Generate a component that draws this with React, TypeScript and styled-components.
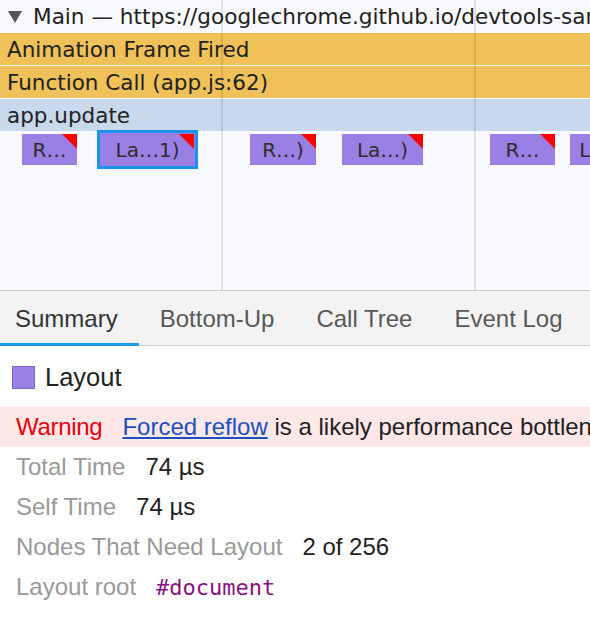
import React from "react";
import styled, { createGlobalStyle } from "styled-components";

const Global = createGlobalStyle`
  html, body { margin: 0; padding: 0; background: #ffffff; }
  body { width: 590px; height: 618px; overflow: hidden; }
  * { box-sizing: border-box; }
`;

const Root = styled.div`
  width: 590px;
  height: 618px;
  overflow: hidden;
  display: flex;
  flex-direction: column;
  background: #ffffff;
`;

const FlameChart = styled.div`
  position: relative;
  height: 291px;
  flex: none;
  background: #f7f9fc;
  border-bottom: 1px solid #cdcdcd;
  overflow: hidden;
  display: flex;
  flex-direction: column;
  gap: 1px;
  font-family: "DejaVu Sans", "Noto Sans", sans-serif;
  color: #222;
`;

const GridLine = styled.div<{ $x: number }>`
  position: absolute;
  top: 0;
  bottom: 0;
  left: ${(p) => p.$x}px;
  width: 2px;
  background: rgba(0, 0, 0, 0.09);
  z-index: 2;
  pointer-events: none;
`;

const TrackHeader = styled.div`
  height: 32px;
  flex: none;
  display: flex;
  align-items: center;
  gap: 11px;
  padding-left: 8px;
  font-size: 21.6px;
  white-space: nowrap;
  color: #222;
`;

const Caret = styled.svg`
  flex: none;
  width: 14px;
  height: 12px;
  margin-top: 1px;
`;

const Bar = styled.div<{ $tone: "yellow" | "blue" }>`
  height: 32px;
  flex: none;
  display: flex;
  align-items: center;
  padding-left: 7px;
  font-size: 21.5px;
  white-space: nowrap;
  background: ${(p) => (p.$tone === "yellow" ? "#efc158" : "#c7d9ea")};
  color: #222;
`;

const EventLane = styled.div`
  position: relative;
  flex: 1;
`;

const Event = styled.div<{ $selected?: boolean }>`
  position: absolute;
  top: 2px;
  height: 31px;
  display: flex;
  align-items: center;
  justify-content: center;
  background: #9a7fe4;
  color: #2c2c2c;
  font-size: 20px;
  white-space: nowrap;
  overflow: hidden;
  box-shadow: ${(p) =>
    p.$selected ? "0 0 0 1px #9a7fe4, 0 0 0 4px #1b93ec" : "none"};
  &::after {
    content: "";
    position: absolute;
    top: 0;
    right: 0;
    width: 0;
    height: 0;
    border-top: 15px solid #ff0000;
    border-left: 15px solid transparent;
  }
`;

const TabBar = styled.div`
  height: 55px;
  flex: none;
  display: flex;
  background: #f3f3f3;
  border-bottom: 1px solid #cfcfcf;
  font-family: "Liberation Sans", Arial, sans-serif;
  font-size: 24px;
`;

const Tab = styled.div<{ $active?: boolean }>`
  display: flex;
  align-items: center;
  padding: 0 21px;
  color: ${(p) => (p.$active ? "#333" : "#585858")};
  box-shadow: ${(p) => (p.$active ? "inset 0 -3px 0 #1d9be6" : "none")};
  margin-bottom: -1px;
  &:first-child {
    padding-left: 15px;
  }
`;

const Details = styled.div`
  flex: 1;
  display: flex;
  flex-direction: column;
  padding-top: 11px;
  font-family: "Liberation Sans", Arial, sans-serif;
  font-size: 24px;
`;

const Title = styled.div`
  height: 40px;
  display: flex;
  align-items: center;
  gap: 10px;
  padding-left: 12px;
  margin-bottom: 10px;
  font-size: 25.5px;
  color: #222;
`;

const Swatch = styled.span<{ $color: string }>`
  width: 23px;
  height: 23px;
  flex: none;
  background: ${(p) => p.$color};
  border: 1px solid #7c64c8;
`;

const Row = styled.div<{ $warning?: boolean }>`
  height: 40px;
  display: flex;
  align-items: center;
  gap: 20px;
  padding-left: 16px;
  white-space: nowrap;
  background: ${(p) => (p.$warning ? "#fde7e7" : "transparent")};
`;

const Label = styled.span<{ $warning?: boolean }>`
  color: ${(p) => (p.$warning ? "#e8000c" : "#999999")};
  letter-spacing: ${(p) => (p.$warning ? "-0.3px" : "0")};
`;

const Value = styled.span`
  color: #222;
`;

const WarningText = styled.span`
  color: #222;
`;

const Link = styled.a`
  color: #1a4fc0;
  text-decoration: underline;
  cursor: pointer;
`;

const Code = styled.span`
  font-family: "DejaVu Sans Mono", "Liberation Mono", monospace;
  font-size: 22px;
  color: #881280;
`;

const events = [
  { left: 22, width: 55, label: "R…" },
  { left: 101, width: 93, label: "La…1)", selected: true },
  { left: 250, width: 66, label: "R…)" },
  { left: 342, width: 81, label: "La…)" },
  { left: 490, width: 65, label: "R…" },
  { left: 570, width: 62, label: "La…" },
];

const tabs = ["Summary", "Bottom-Up", "Call Tree", "Event Log"];

export default function App() {
  return (
    <Root>
      <Global />
      <FlameChart>
        <GridLine $x={221} />
        <GridLine $x={474} />
        <TrackHeader>
          <Caret viewBox="0 0 14 12">
            <path d="M0 0 H14 L7 12 Z" fill="#555" />
          </Caret>
          Main — https://googlechrome.github.io/devtools-samples/jank/
        </TrackHeader>
        <Bar $tone="yellow">Animation Frame Fired</Bar>
        <Bar $tone="yellow">Function Call (app.js:62)</Bar>
        <Bar $tone="blue">app.update</Bar>
        <EventLane>
          {events.map((e) => (
            <Event
              key={e.left}
              $selected={e.selected}
              style={{ left: e.left, width: e.width }}
            >
              {e.label}
            </Event>
          ))}
        </EventLane>
      </FlameChart>
      <TabBar>
        {tabs.map((t, i) => (
          <Tab key={t} $active={i === 0}>
            {t}
          </Tab>
        ))}
      </TabBar>
      <Details>
        <Title>
          <Swatch $color="#9a7fe4" />
          Layout
        </Title>
        <Row $warning>
          <Label $warning>Warning</Label>
          <WarningText>
            <Link>Forced reflow</Link> is a likely performance bottleneck.
          </WarningText>
        </Row>
        <Row>
          <Label>Total Time</Label>
          <Value>74 µs</Value>
        </Row>
        <Row>
          <Label>Self Time</Label>
          <Value>74 µs</Value>
        </Row>
        <Row>
          <Label>Nodes That Need Layout</Label>
          <Value>2 of 256</Value>
        </Row>
        <Row>
          <Label>Layout root</Label>
          <Code>#document</Code>
        </Row>
      </Details>
    </Root>
  );
}
